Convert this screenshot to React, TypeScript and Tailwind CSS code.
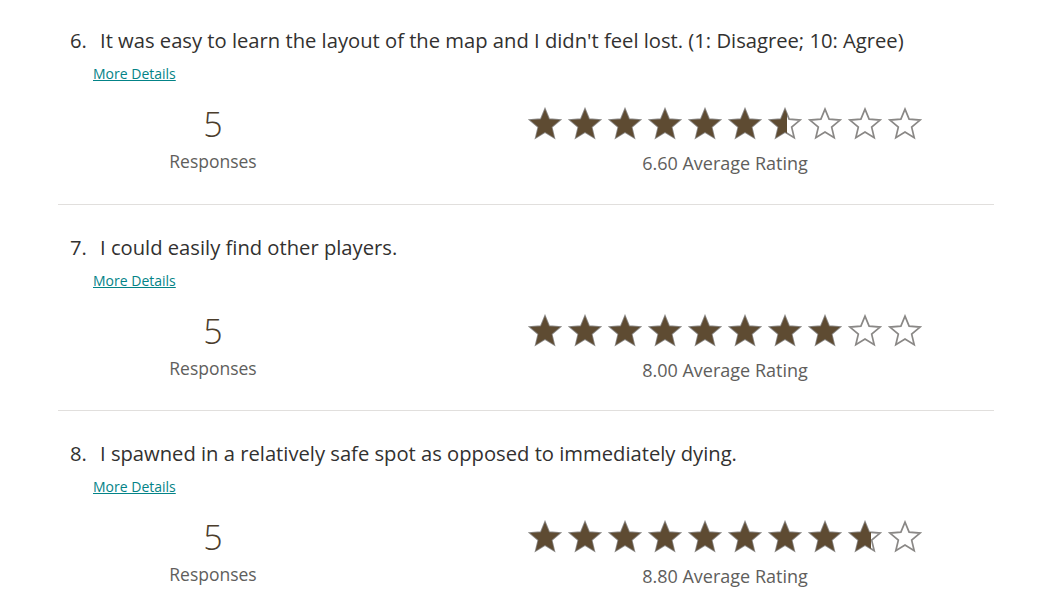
const questions = [
  { num: 6, text: "It was easy to learn the layout of the map and I didn't feel lost. (1: Disagree; 10: Agree)", responses: 5, rating: 6.6 },
  { num: 7, text: 'I could easily find other players.', responses: 5, rating: 8.0 },
  { num: 8, text: 'I spawned in a relatively safe spot as opposed to immediately dying.', responses: 5, rating: 8.8 },
];

const STAR = '12,1.5 14.9,8.6 22.6,9.2 16.7,14.2 18.5,21.7 12,17.6 5.5,21.7 7.3,14.2 1.4,9.2 9.1,8.6';

function Star({ fill }: { fill: number }) {
  return (
    <div className="relative h-[34px] w-[34px]">
      <svg viewBox="0 0 24 24" className="absolute inset-0 h-[34px] w-[34px]">
        <polygon points={STAR} fill="none" stroke="#8a8886" strokeWidth="1.2" strokeLinejoin="miter" />
      </svg>
      {fill > 0 && (
        <div className="absolute inset-y-0 left-0 overflow-hidden" style={{ width: `${fill * 100}%` }}>
          <svg viewBox="0 0 24 24" className="h-[34px] w-[34px]">
            <polygon points={STAR} fill="#5e4b32" />
          </svg>
        </div>
      )}
    </div>
  );
}

function Stars({ rating }: { rating: number }) {
  return (
    <div className="flex gap-[6px]">
      {Array.from({ length: 10 }).map((_, i) => {
        const f = Math.max(0, Math.min(1, rating - i));
        // partial star fills a bit less than linear
        return <Star key={i} fill={f > 0 && f < 1 ? 0.2 + f * 0.6 : f} />;
      })}
    </div>
  );
}

export default function App() {
  return (
    <div className="min-h-screen bg-white font-['Segoe_UI','Open_Sans',sans-serif] text-[#323130]">
      <div className="ml-[58px] w-[936px]">
        {questions.map((q, idx) => (
          <div
            key={q.num}
            className={`${idx === 0 ? 'pt-[26px] pb-[30px]' : 'pt-[28px] pb-[29px]'} ${idx < questions.length - 1 ? 'border-b border-[#e1dfdd]' : ''}`}
          >
            <div className="flex items-baseline pl-[12px] text-[20.2px] leading-[28px]">
              <span className="w-[30px]">{q.num}.</span>
              <span>{q.text}</span>
            </div>
            <a href="#" className="ml-[35px] block text-[14px] leading-[20px] text-[#038387] underline mt-[10px]">
              More Details
            </a>
            <div className="mt-[18px] flex">
              <div className="flex w-[310px] flex-col items-center">
                <div className="text-[34px] font-light leading-[44px] text-[#4b3d2c]">{q.responses}</div>
                <div className="mt-[4px] text-[17.5px] leading-[22px] text-[#605e5c]">Responses</div>
              </div>
              <div className="ml-[160px] mt-[5px] flex flex-col items-center">
                <Stars rating={q.rating} />
                <div className="mt-[11px] text-[18px] leading-[22px] text-[#605e5c]">{q.rating.toFixed(2)} Average Rating</div>
              </div>
            </div>
          </div>
        ))}
      </div>
    </div>
  );
}
